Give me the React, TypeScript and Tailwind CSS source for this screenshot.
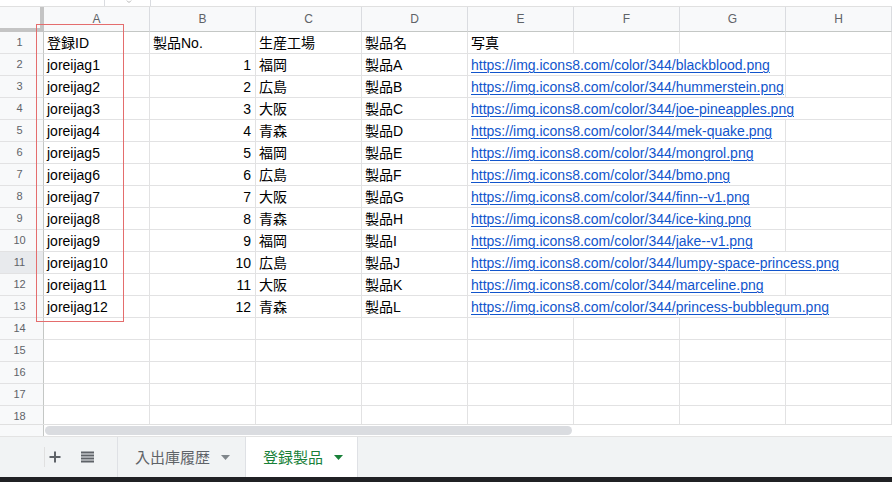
import React from "react";

type Row = [string, number, string, string, string, number];

const data: Row[] = [
  ["joreijag1", 1, "福岡", "製品A", "blackblood", 3],
  ["joreijag2", 2, "広島", "製品B", "hummerstein", 3],
  ["joreijag3", 3, "大阪", "製品C", "joe-pineapples", 4],
  ["joreijag4", 4, "青森", "製品D", "mek-quake", 3],
  ["joreijag5", 5, "福岡", "製品E", "mongrol", 3],
  ["joreijag6", 6, "広島", "製品F", "bmo", 3],
  ["joreijag7", 7, "大阪", "製品G", "finn--v1", 3],
  ["joreijag8", 8, "青森", "製品H", "ice-king", 3],
  ["joreijag9", 9, "福岡", "製品I", "jake--v1", 3],
  ["joreijag10", 10, "広島", "製品J", "lumpy-space-princess", 4],
  ["joreijag11", 11, "大阪", "製品K", "marceline", 3],
  ["joreijag12", 12, "青森", "製品L", "princess-bubblegum", 4],
];

const spanW: Record<number, string> = {
  1: "w-[106px]",
  3: "w-[318px]",
  4: "w-[424px]",
};

const cellBase =
  "h-[22px] shrink-0 border-r border-b border-[#e2e2e3] flex items-end pb-[2px] leading-[16px] whitespace-nowrap";

function Cell({
  children,
  right,
  w = "w-[106px]",
}: {
  children?: React.ReactNode;
  right?: boolean;
  w?: string;
}) {
  return (
    <div
      className={`${cellBase} ${w} ${right ? "justify-end pr-[4px]" : "pl-[3px]"} overflow-visible`}
    >
      {children}
    </div>
  );
}

function RowHeader({ n, hover }: { n: number; hover?: boolean }) {
  return (
    <div
      className={`w-[44px] h-[22px] shrink-0 border-r border-r-[#c4c7c5] border-b border-b-[#e2e2e3] flex items-center justify-center pr-[4px] text-[11px] text-[#5f6368] ${
        hover ? "bg-[#e8eaed]" : "bg-[#f8f9fa]"
      }`}
    >
      {n}
    </div>
  );
}

function Empties({ count }: { count: number }) {
  return (
    <>
      {Array.from({ length: count }).map((_, i) => (
        <Cell key={i} />
      ))}
    </>
  );
}

export default function App() {
  const cols = ["A", "B", "C", "D", "E", "F", "G", "H"];
  return (
    <div className="relative w-[892px] h-[482px] overflow-hidden bg-white font-['Liberation_Sans','Noto_Sans_CJK_JP',sans-serif] text-[14px] text-black">
      {/* top strip */}
      <div className="h-[7px] border-b border-[#e0e0e0] flex overflow-hidden">
        <div className="w-[104px] shrink-0" />
        <div className="w-[47px] shrink-0 border-l border-r border-[#dadce0] flex justify-center pl-[2px]">
          <svg width="6" height="4" viewBox="0 0 6 4">
            <path d="M0.8 0.5 Q3 4 5.2 0.5" fill="none" stroke="#c0c0c0" strokeWidth="1" />
          </svg>
        </div>
      </div>

      {/* grid */}
      <div className="h-[417px] overflow-hidden">
        {/* header */}
        <div className="flex h-[25px]">
          <div className="w-[44px] h-[25px] shrink-0 bg-[#f8f9fa] border-r-[4px] border-b-[4px] border-[#c4c4c4]" />
          {cols.map((c) => (
            <div
              key={c}
              className="w-[106px] h-[25px] shrink-0 bg-[#f8f9fa] border-r border-r-[#dadce0] border-b border-b-[#c4c7c5] flex items-center justify-center text-[12px] text-[#5f6368]"
            >
              {c}
            </div>
          ))}
        </div>

        {/* row 1 */}
        <div className="flex">
          <RowHeader n={1} />
          <Cell>登録ID</Cell>
          <Cell>製品No.</Cell>
          <Cell>生産工場</Cell>
          <Cell>製品名</Cell>
          <Cell>写真</Cell>
          <Empties count={3} />
        </div>

        {data.map((r, i) => (
          <div className="flex" key={r[0]}>
            <RowHeader n={i + 2} hover={i + 2 === 11} />
            <Cell>{r[0]}</Cell>
            <Cell right>{r[1]}</Cell>
            <Cell>{r[2]}</Cell>
            <Cell>{r[3]}</Cell>
            <Cell w={spanW[r[5]]}>
              <span className="text-[#1155cc] underline decoration-1 underline-offset-[2px]">
                {`https://img.icons8.com/color/344/${r[4]}.png`}
              </span>
            </Cell>
            <Empties count={4 - r[5]} />
          </div>
        ))}

        {[14, 15, 16, 17, 18].map((n) => (
          <div className="flex" key={n}>
            <RowHeader n={n} />
            <Empties count={8} />
          </div>
        ))}
      </div>

      {/* scrollbar row */}
      <div className="h-[12px] border-t border-[#e0e0e0] flex">
        <div className="w-[44px] shrink-0 bg-[#f8f9fa] border-r border-[#c4c7c5]" />
        <div className="flex-1 pt-[1px] pl-[1px]">
          <div className="w-[527px] h-[9px] rounded-[5px] bg-[#dadce0]" />
        </div>
      </div>

      {/* tab bar */}
      <div className="h-[41px] border-t border-[#e3e3e3] bg-[#f1f3f4] flex">
        <div className="w-[118px] shrink-0 border-r border-[#dfe1e5] flex items-center">
          <div className="w-[44px] shrink-0" />
          <div className="h-[20px] border-l border-[#e0e0e0] flex items-center pl-[4px]">
            <svg width="12" height="12" viewBox="0 0 12 12">
              <rect x="5" y="0.5" width="2" height="11" fill="#5f6368" />
              <rect x="0.5" y="5" width="11" height="2" fill="#5f6368" />
            </svg>
            <svg width="13" height="13" viewBox="0 0 13 13" className="ml-[20px]">
              <rect x="0" y="0.5" width="13" height="2" fill="#5f6368" />
              <rect x="0" y="3.5" width="13" height="2" fill="#5f6368" />
              <rect x="0" y="6.5" width="13" height="2" fill="#5f6368" />
              <rect x="0" y="9.5" width="13" height="2" fill="#5f6368" />
            </svg>
          </div>
        </div>
        <div className="w-[128px] shrink-0 flex items-center pl-[17px] border-r border-[#dfe1e5] text-[15px] text-[#5f6368] font-['Noto_Sans_CJK_JP',sans-serif]">
          <span>入出庫履歴</span>
          <svg width="9" height="5" viewBox="0 0 9 5" className="ml-[11px] mt-[1px]">
            <path d="M0 0 L9 0 L4.5 5 Z" fill="#80868b" />
          </svg>
        </div>
        <div className="w-[112px] shrink-0 bg-white flex items-center pl-[17px] border-r border-[#dfe1e5] text-[15px] text-[#188038] font-['Noto_Sans_CJK_JP',sans-serif]">
          <span>登録製品</span>
          <svg width="9" height="5" viewBox="0 0 9 5" className="ml-[11px] mt-[1px]">
            <path d="M0 0 L9 0 L4.5 5 Z" fill="#188038" />
          </svg>
        </div>
        <div className="flex-1" />
      </div>

      <div className="h-[5px] bg-[#202124]" />

      {/* drawn red rectangle */}
      <div className="absolute left-[36px] top-[24px] w-[88px] h-[298px] border border-[#e46d6d]" />
    </div>
  );
}
